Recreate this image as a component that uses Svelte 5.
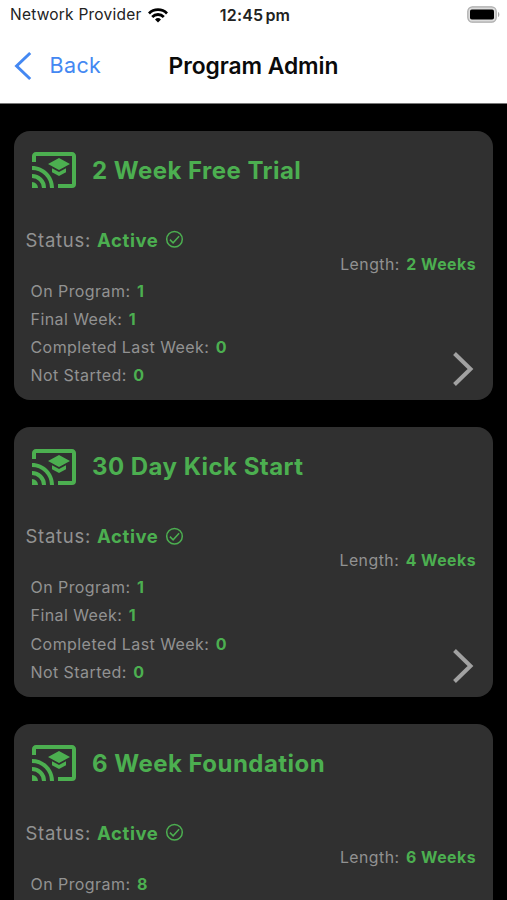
<script lang="ts">
	interface Program { name: string; status: string; weeks: number; onProgram: number; finalWeek: number; completed: number; notStarted: number }

	const programs: Program[] = [
		{ name: '2 Week Free Trial', status: 'Active', weeks: 2, onProgram: 1, finalWeek: 1, completed: 0, notStarted: 0 },
		{ name: '30 Day Kick Start', status: 'Active', weeks: 4, onProgram: 1, finalWeek: 1, completed: 0, notStarted: 0 },
		{ name: '6 Week Foundation', status: 'Active', weeks: 6, onProgram: 8, finalWeek: 1, completed: 0, notStarted: 0 },
	];
</script>

<div class="screen">
	<div class="statusbar">
		<div class="carrier">
			<span>Network Provider</span>
			<svg width="20" height="15" viewBox="0 0 20 15" fill="none" stroke="#000" stroke-width="2.8">
				<path d="M1 5.4a12.8 12.8 0 0 1 18 0" />
				<path d="M4.2 8.9a8.2 8.2 0 0 1 11.6 0" />
				<path d="M10 14.6l-3-3.1a4.3 4.3 0 0 1 6 0z" fill="#000" stroke="none" />
			</svg>
		</div>
		<span class="time">12:45<i></i>pm</span>
		<div class="battery">
			<svg width="33" height="17" viewBox="0 0 33 17">
				<rect x=".8" y=".8" width="28.4" height="15.4" rx="4.6" fill="#dcdcdc" stroke="#aaa" stroke-width="1.2" />
				<rect x="3" y="3.5" width="24" height="10" rx="1.8" />
				<path d="M31 6v5c1.8-.6 1.8-4.4 0-5z" fill="#aaa" />
			</svg>
		</div>
	</div>

	<header class="nav">
		<button class="back">
			<svg width="18" height="30" viewBox="0 0 18 30" fill="none" stroke="#4488f2" stroke-width="3"><path d="M16.2 2L2.6 15l13.6 13" /></svg>
			<span>Back</span>
		</button>
		<h1>Program Admin</h1>
		<span></span>
	</header>

	<main class="list">
		{#each programs as p}
			<section class="card">
				<div class="head">
					<svg width="48" height="48" viewBox="0 0 24 24" fill="#4caf50">
						<path d="M21 3H3c-1.11 0-2 .89-2 2v3h2V5h18v14h-7v2h7a2 2 0 0 0 2-2V5c0-1.11-.9-2-2-2M1 10v2a9 9 0 0 1 9 9h2C12 14.92 7.07 10 1 10m0 4v2a5 5 0 0 1 5 5h2a7 7 0 0 0-7-7m0 4v3h3a3 3 0 0 0-3-3M11 11.09v2L14.5 15l3.5-1.91v-2L14.5 13 11 11.09M14.5 6L9 9l5.5 3L20 9l-5.5-3z" />
					</svg>
					<h2>{p.name}</h2>
				</div>
				<div class="status">
					<span>Status:</span>
					<b>{p.status}</b>
					<svg width="21" height="21" viewBox="0 0 21 21" fill="none" stroke="#4caf50" stroke-width="1.5">
						<circle cx="10.5" cy="10.2" r="7.8" />
						<path d="M5.9 10.6l3.2 3.2 6-6.5" />
					</svg>
				</div>
				<div class="length">Length: <b>{p.weeks} Weeks</b></div>
				<div class="bottom">
					<div class="stats">
						<div>On Program: <b>{p.onProgram}</b></div>
						<div>Final Week: <b>{p.finalWeek}</b></div>
						<div>Completed Last Week: <b>{p.completed}</b></div>
						<div>Not Started: <b>{p.notStarted}</b></div>
					</div>
					<svg class="chevron" width="22" height="36" viewBox="0 0 22 36" fill="none" stroke="#a1a1a1" stroke-width="4"><path d="M2.5 2.5L18.5 18l-16 15.5" /></svg>
				</div>
			</section>
		{/each}
	</main>
</div>

<style>
	:global(body) { margin: 0; overflow: hidden; background: #000; }
	.screen { display: flex; flex-direction: column; width: 507px; height: 900px; overflow: hidden; background: #000; font-family: Inter, sans-serif; box-sizing: border-box; }
	.statusbar { flex: none; display: grid; grid-template-columns: 1fr auto 1fr; align-items: center; height: 30px; padding: 0 7px 0 10px; background: #fff; color: #222; font-size: 15.5px; line-height: 30px; }
	.carrier { display: flex; align-items: center; gap: 6.5px; letter-spacing: .22px; }
	.time { font-weight: 600; font-size: 16px; letter-spacing: .2px; }
	.time i { display: inline-block; width: 2px; }
	.battery { display: flex; justify-content: flex-end; padding-bottom: 2px; }
	.nav { flex: none; display: grid; grid-template-columns: 1fr auto 1fr; align-items: center; height: 74px; padding: 0 14px 2px; background: #fff; border-bottom: 1px solid #777; box-sizing: border-box; }
	.back { display: flex; align-items: center; gap: 17.5px; padding: 0; border: 0; background: none; color: #4488f2; font: 400 21.5px Inter, sans-serif; letter-spacing: .4px; }
	.back span { padding-bottom: 1px; }
	h1 { margin: 0; font-size: 22.8px; font-weight: 600; letter-spacing: -.05px; color: #0a0a0a; }
	.list { display: flex; flex-direction: column; gap: 27px; padding: 26.5px 14px 0; }
	.card { flex: none; height: 269.5px; border-radius: 16px; background: #303030; color: #929292; box-sizing: border-box; padding: 15.5px 17px 0 11.5px; }
	.head { display: flex; align-items: center; gap: 14px; height: 48px; padding-left: 4.5px; }
	h2 { margin: 0; font-size: 24px; font-weight: 650; letter-spacing: .47px; color: #4caf50; }
	b { font-weight: 650; color: #4caf50; }
	.status { display: flex; align-items: center; height: 26px; margin-top: 32.5px; font-size: 18.5px; letter-spacing: .72px; }
	.status b { margin: 0 6px; letter-spacing: .6px; }
	.length { height: 24px; line-height: 24px; text-align: right; font-size: 15.8px; letter-spacing: .5px; }
	.length b { margin-left: 1.5px; }
	.bottom { display: flex; justify-content: space-between; align-items: flex-end; }
	.stats { padding-left: 5px; font-size: 16px; line-height: 28.3px; letter-spacing: .43px; }
	.stats b { margin-left: 1.5px; }
	.chevron { margin: 0 2.5px 2.5px 0; }
</style>
